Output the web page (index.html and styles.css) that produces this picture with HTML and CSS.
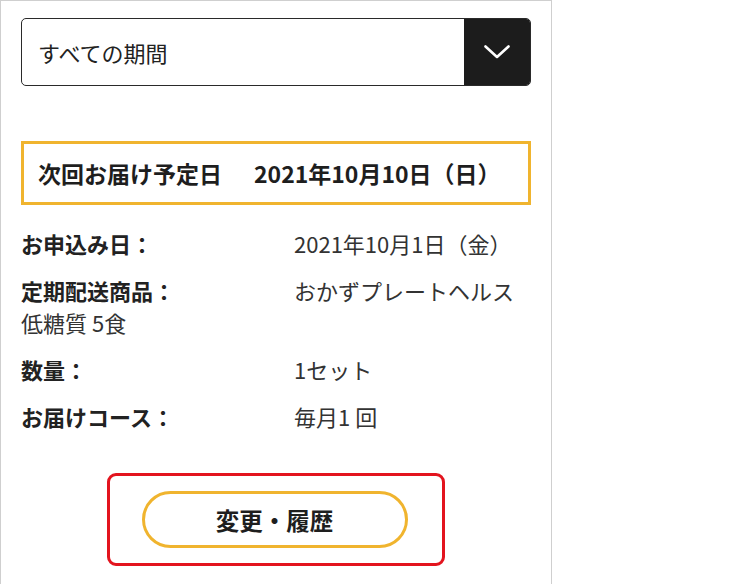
FILE: index.html
```html
<!DOCTYPE html>
<html lang="ja">
<head>
<meta charset="utf-8">
<link rel="stylesheet" href="styles.css">
</head>
<body>
<div class="panel">
  <div class="select">
    <div class="select-label">すべての期間</div>
    <div class="select-btn">
      <svg width="28" height="16" viewBox="0 0 28 16"><path d="M2.5 2.5 L14 13 L25.5 2.5" fill="none" stroke="#fff" stroke-width="2.6" stroke-linecap="round" stroke-linejoin="round"/></svg>
    </div>
  </div>
  <div class="next"><span class="next-title">次回お届け予定日</span><span>2021年10月10日（日）</span></div>
  <div class="rows">
    <p class="row"><span class="label">お申込み日：</span>2021年10月1日（金）</p>
    <p class="row"><span class="label">定期配送商品：</span>おかずプレートヘルス低糖質 5食</p>
    <p class="row"><span class="label">数量：</span>1セット</p>
    <p class="row"><span class="label">お届けコース：</span>毎月1 回</p>
  </div>
  <div class="action-wrap">
    <div class="highlight">
      <button class="pill">変更・履歴</button>
    </div>
  </div>
</div>
</body>
</html>
```
FILE: styles.css
```css
html, body {
  margin: 0;
  padding: 0;
  background: #fff;
}
body {
  font-family: "Noto Sans CJK JP", "Noto Sans", sans-serif;
  color: #222;
}
.panel {
  box-sizing: border-box;
  width: 552px;
  min-height: 600px;
  border: 1px solid #cfcfcf;
  border-bottom: none;
  padding: 17px 20px 0 20px;
}
.select {
  display: flex;
  height: 68px;
  box-sizing: border-box;
  border: 1px solid #2a2a2a;
  border-radius: 5px;
  overflow: hidden;
}
.select-label {
  flex: 1;
  display: flex;
  align-items: center;
  padding-left: 16px;
  font-size: 22px;
  color: #222;
}
.select-btn {
  width: 66px;
  background: #1c1c1c;
  display: flex;
  align-items: center;
  justify-content: center;
}
.next {
  margin-top: 55px;
  height: 64px;
  box-sizing: border-box;
  border: 3px solid #f0b42e;
  display: flex;
  align-items: center;
  padding-left: 14px;
  font-size: 23px;
  font-weight: 700;
  color: #1e1e1e;
}
.next-title {
  margin-right: 32px;
}
.rows {
  margin-top: 22px;
}
.row {
  margin: 0 0 15px 0;
  font-size: 22px;
  line-height: 32px;
  color: #333;
}
.label {
  display: inline-block;
  width: 273px;
  line-height: 32px;
  vertical-align: top;
  font-weight: 700;
  color: #222;
}
.action-wrap {
  display: flex;
  justify-content: center;
  margin-top: 41px;
}
.highlight {
  width: 338px;
  height: 93px;
  box-sizing: border-box;
  border: 3px solid #e3141e;
  border-radius: 9px;
  display: flex;
  align-items: center;
  justify-content: center;
  padding-right: 3px;
}
.pill {
  width: 266px;
  height: 57px;
  box-sizing: border-box;
  border: 3px solid #f0b42e;
  border-radius: 30px;
  background: #fff;
  font-family: "Noto Sans CJK JP", "Noto Sans", sans-serif;
  font-size: 23.5px;
  font-weight: 700;
  color: #1e1e1e;
  padding: 0;
}
```
